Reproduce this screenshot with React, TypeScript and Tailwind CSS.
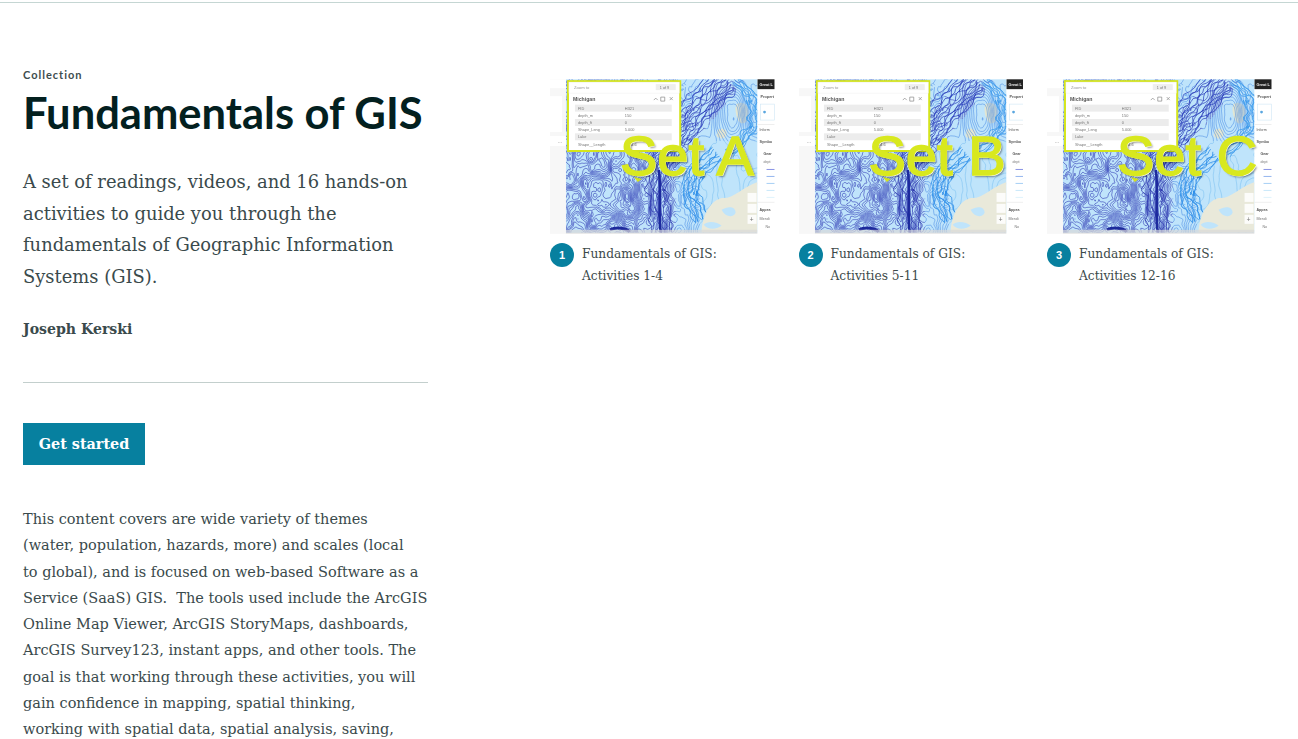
import { useId } from "react";

const serif = "font-['DejaVu_Serif',serif]";

// value noise for the contour picture in the thumbnails
const hash = (x: number, y: number) => {
  const s = Math.sin(x * 127.1 + y * 311.7) * 43758.5453;
  return s - Math.floor(s);
};
const smooth = (t: number) => t * t * (3 - 2 * t);
const noise = (x: number, y: number) => {
  const ix = Math.floor(x);
  const iy = Math.floor(y);
  const fx = smooth(x - ix);
  const fy = smooth(y - iy);
  const a = hash(ix, iy) + (hash(ix + 1, iy) - hash(ix, iy)) * fx;
  const b = hash(ix, iy + 1) + (hash(ix + 1, iy + 1) - hash(ix, iy + 1)) * fx;
  return a + (b - a) * fy;
};

const depth = (x: number, y: number) => {
  const rough = x < 125 ? 1 : Math.max(0.2, 1 - (x - 125) / 40);
  return (
    5 * noise(x / 26 + 3, y / 42 + 1) +
    rough * 2.4 * noise(x / 7, y / 14 + 5) +
    rough * 0.9 * noise(x / 3.5, y / 5)
  );
};

const tone = (x: number, y: number) => {
  if (x < 125) return 0;
  if (Math.abs(y - (85 - (x - 115) * 1.25)) < 22) return 0;
  if (x < 150 && y > 90) return 1;
  if (y < 70) return 1;
  return 2;
};

const buildContours = () => {
  const paths = ["", "", ""];
  const step = 2;
  let index = 0;
  for (let level = 0.6; level < 9; level += 0.3) {
    index++;
    for (let x = 16; x < 208; x += step) {
      for (let y = 9; y < 163; y += step) {
        const zone = tone(x, y);
        if (zone === 2 && index % 2 === 1) continue;
        const v = [
          depth(x, y),
          depth(x + step, y),
          depth(x + step, y + step),
          depth(x, y + step),
        ];
        const corners = [
          [x, y],
          [x + step, y],
          [x + step, y + step],
          [x, y + step],
        ];
        const hits: number[][] = [];
        for (let i = 0; i < 4; i++) {
          const j = (i + 1) % 4;
          if (v[i] < level !== v[j] < level) {
            const t = (level - v[i]) / (v[j] - v[i]);
            hits.push([
              corners[i][0] + (corners[j][0] - corners[i][0]) * t,
              corners[i][1] + (corners[j][1] - corners[i][1]) * t,
            ]);
          }
        }
        if (hits.length >= 2) {
          paths[zone] += `M${hits[0][0].toFixed(1)} ${hits[0][1].toFixed(1)}L${hits[1][0].toFixed(1)} ${hits[1][1].toFixed(1)}`;
        }
      }
    }
  }
  return paths;
};

// bundles of wobbly lines along a route, for the dense bands of the map
const strands = (route: number[][], count: number, spread: number, seed: number) => {
  let d = "";
  for (let n = 0; n < count; n++) {
    const off = (n / (count - 1) - 0.5) * spread;
    for (let s = 0; s < route.length - 1; s++) {
      const [x0, y0] = route[s];
      const [x1, y1] = route[s + 1];
      const len = Math.hypot(x1 - x0, y1 - y0);
      const nx = -(y1 - y0) / len;
      const ny = (x1 - x0) / len;
      const parts = Math.ceil(len / 3);
      for (let p = 0; p <= parts; p++) {
        const t = p / parts;
        const bx = x0 + (x1 - x0) * t;
        const by = y0 + (y1 - y0) * t;
        const w = (noise(bx / 6 + n * 1.7 + seed, by / 6 + n) - 0.5) * 7 + off;
        const cmd = p === 0 && s === 0 ? "M" : "L";
        d += `${cmd}${(bx + nx * w).toFixed(1)} ${(by + ny * w).toFixed(1)}`;
      }
    }
  }
  return d;
};

const contours = buildContours();
const diagonal = strands([[112, 92], [128, 62], [150, 36], [176, 9]], 13, 30, 1);
const channel = strands([[112, 88], [108, 120], [112, 163]], 8, 20, 7);
const shore = strands([[168, 84], [146, 102], [140, 124], [152, 150]], 9, 16, 13);
const rim = strands([[186, 10], [204, 30], [204, 58], [180, 84]], 7, 10, 19);

const popupRows = [
  ["FID", "H321"],
  ["depth_m", "150"],
  ["depth_ft", "0"],
  ["Shape_Leng", "5.000"],
  ["Lake", ""],
  ["Shape__Length", "1464.6"],
];

const MapPicture = () => {
  const id = useId();
  return (
    <svg viewBox="0 0 225 166" className="block h-[166px] w-full">
      <defs>
        <filter id={id}>
          <feGaussianBlur stdDeviation="0.45" />
        </filter>
        <clipPath id={`${id}c`}>
          <rect x="16" y="9" width="192" height="154" />
        </clipPath>
      </defs>
      <g filter={`url(#${id})`} fontFamily="'Liberation Sans', sans-serif">
        <rect x="0" y="9" width="16" height="155" fill="#f7f7f7" />
        <rect x="0" y="9" width="16" height="9" fill="#ffffff" />
        <rect x="0" y="26" width="12" height="36" fill="#ffffff" />
        <rect x="0" y="66" width="16" height="10" fill="#ffffff" />
        <text x="8" y="73" fontSize="5" fill="#666">...</text>

        <rect x="16" y="9" width="192" height="154" fill="#bfe4fb" />
        <g clipPath={`url(#${id}c)`} fill="none">
          {/* land and islands that the lines run over */}
          <path d="M187 34 C194 30 200 36 199 46 C198 53 192 56 189 51 C186 46 185 38 187 34Z" fill="#e3e6d2" />
          <path d="M168 60 C174 57 178 60 177 65 C175 70 169 69 167 66Z" fill="#e3e6d2" />
          {/* contours */}
          <path d={contours[2]} stroke="#6db9f0" strokeWidth="0.45" />
          <path d={contours[1]} stroke="#3d82e2" strokeWidth="0.5" />
          <path d={contours[0]} stroke="#2630b0" strokeWidth="0.55" />
          {/* dense bands */}
          <path d={shore} stroke="#2c8ee8" strokeWidth="0.8" />
          <path d={rim} stroke="#3f9cec" strokeWidth="0.8" />
          <path d={diagonal} stroke="#2438b8" strokeWidth="0.7" />
          <path d={channel} stroke="#2530aa" strokeWidth="0.7" />
          <path d="M109 100 C112 120 108 140 111 163" stroke="#1f2b9e" strokeWidth="2.6" />
          <path d="M60 160 C66 157 76 158 80 162" stroke="#1f2a9c" strokeWidth="3" />
          {/* mainland and lakes */}
          <path d="M152 163 C152 150 158 132 172 128 C182 130 192 118 208 112 L208 163Z" fill="#e9e9da" />
          <path d="M172 140 C178 136 186 136 186 143 C184 148 176 148 172 140Z" fill="#bfe4fb" />
          <path d="M154 155 C158 150 168 152 172 156 C166 160 158 160 154 155Z" fill="#bfe4fb" />
        </g>
        <rect x="16" y="160" width="192" height="4" fill="#d8d8d8" opacity="0.7" />

        {/* popup */}
        <rect x="18" y="11" width="112.5" height="70" fill="#ffffff" stroke="#d4e41c" strokeWidth="2" />
        <rect x="19" y="12" width="110.5" height="11" fill="#ffffff" stroke="#eeeeee" strokeWidth="0.5" />
        <text x="24" y="19" fontSize="4.2" fill="#999">Zoom to</text>
        <rect x="106" y="14" width="20" height="6" fill="#eeeeee" />
        <text x="110" y="18.5" fontSize="3.8" fill="#777">1 of 9</text>
        <text x="23" y="31" fontSize="5.2" fontWeight="700" fill="#555">Michigan</text>
        <path d="M104 30l2-2 2 2M111 27h4v4h-4zM120 27l3 3m0-3l-3 3" stroke="#888" strokeWidth="0.7" fill="none" />
        {popupRows.map(([label, value], i) => (
          <g key={label}>
            <rect x="25" y={34.5 + i * 7.2} width="97" height="7.2" fill={i % 2 === 0 ? "#ececec" : "#ffffff"} />
            <text x="28" y={39.5 + i * 7.2} fontSize="3.9" fill="#777">{label}</text>
            <text x="75" y={39.5 + i * 7.2} fontSize="3.9" fill="#777">{value}</text>
          </g>
        ))}
        <path d="M84 107 L92 109 L88 112Z" fill="#d4e41c" />

        {/* map controls */}
        <rect x="198" y="123" width="9" height="9" fill="#ffffff" opacity="0.85" />
        <rect x="198" y="134" width="9" height="9" fill="#ffffff" opacity="0.85" />
        <rect x="198" y="145" width="9" height="9" fill="#ffffff" opacity="0.85" />
        <text x="200" y="152" fontSize="7" fill="#777">+</text>

        {/* side panel */}
        <rect x="208" y="9" width="17" height="155" fill="#ffffff" />
        <rect x="208" y="9" width="17" height="10" fill="#222222" />
        <text x="210" y="16" fontSize="3.8" fontWeight="700" fill="#eeeeee">Great L</text>
        <text x="211" y="28" fontSize="3.8" fontWeight="700" fill="#555">Propert</text>
        <rect x="211" y="34" width="14" height="16" fill="#ffffff" stroke="#cfe6f5" strokeWidth="0.6" />
        <circle cx="215" cy="42" r="1.4" fill="#5aa6df" />
        <rect x="208" y="54" width="17" height="0.5" fill="#dddddd" />
        <text x="210" y="61" fontSize="3.6" fill="#555">Inform</text>
        <text x="210" y="73" fontSize="3.8" fontWeight="700" fill="#555">Symbo</text>
        <text x="214" y="85" fontSize="3.6" fontWeight="700" fill="#555">Gear</text>
        <text x="214" y="93" fontSize="3.6" fill="#777">dept</text>
        <rect x="217" y="99" width="8" height="0.8" fill="#6b78dd" />
        <rect x="217" y="106" width="8" height="0.8" fill="#7aa3ea" />
        <rect x="217" y="113" width="8" height="0.8" fill="#8fc4f2" />
        <rect x="217" y="120" width="8" height="1" fill="#c8e8fa" />
        <rect x="217" y="127" width="8" height="1" fill="#dff3fc" />
        <rect x="208" y="132" width="17" height="0.5" fill="#dddddd" />
        <text x="210" y="141" fontSize="3.6" fontWeight="700" fill="#555">Appea</text>
        <text x="210" y="150" fontSize="3.6" fill="#777">Blendi</text>
        <text x="216" y="158" fontSize="3.6" fill="#777">No</text>
      </g>
    </svg>
  );
};

const sets = [
  { letter: "A", step: 1, title: "Activities 1-4" },
  { letter: "B", step: 2, title: "Activities 5-11" },
  { letter: "C", step: 3, title: "Activities 12-16" },
];

export default function App() {
  return (
    <div className="h-[739px] overflow-hidden bg-white">
      <div className="mt-0.5 h-px bg-[#c5d6d3]" />
      <div className="flex pl-[23px] pt-[65px]">
        {/* Left column */}
        <div className="w-[405px] shrink-0">
          <div className="text-[11px] font-bold leading-[14px] tracking-[0.09em] text-[#3d4d4e] font-['Lato',sans-serif]">
            Collection
          </div>
          <h1 className="mt-[5px] text-[43.5px] font-bold leading-[50px] text-[#03201f] font-['Lato',sans-serif]">
            Fundamentals of GIS
          </h1>
          <p className={`mt-[29px] text-[17.9px] leading-[31.5px] text-[#3a4a4c] ${serif}`}>
            A set of readings, videos, and 16 hands-on activities to guide you through the fundamentals of Geographic Information Systems (GIS).
          </p>
          <div className={`mt-[25px] text-[14.1px] font-bold leading-[24px] text-[#3a4a4c] ${serif}`}>
            Joseph Kerski
          </div>
          <div className="mt-[41px] h-px bg-[#c3cfcd]" />
          <button className={`mt-10 block h-[42px] w-[122px] bg-[#07809f] text-[14.4px] font-bold text-white ${serif}`}>
            Get started
          </button>
          <p className={`mt-[41px] text-[14.5px] leading-[26.3px] text-[#3a4a4c] whitespace-pre ${serif}`}>
            {"This content covers are wide variety of themes\n(water, population, hazards, more) and scales (local\nto global), and is focused on web-based Software as a\nService (SaaS) GIS.  The tools used include the ArcGIS\nOnline Map Viewer, ArcGIS StoryMaps, dashboards,\nArcGIS Survey123, instant apps, and other tools. The\ngoal is that working through these activities, you will\ngain confidence in mapping, spatial thinking,\nworking with spatial data, spatial analysis, saving,"}
          </p>
        </div>

        {/* Right column */}
        <div className="ml-[122px] mt-[2px] flex gap-[24px]">
          {sets.map((set) => (
            <div key={set.letter} className="w-[224.5px]">
              <div className="relative">
                <MapPicture />
                <div className="absolute left-[70px] top-[58px] text-[56px] leading-none whitespace-nowrap text-[#d8e81f] blur-[0.3px] font-['Liberation_Sans',sans-serif] [-webkit-text-stroke:1.5px_#d8e81f] [text-shadow:1px_1px_0_#ffffff,2px_2px_2px_rgba(0,0,0,0.4)]">
                  Set {set.letter}
                </div>
              </div>
              <div className="mt-[7px] flex gap-2">
                <div className="flex h-6 w-6 shrink-0 items-center justify-center rounded-full bg-[#07809f] text-[11px] font-bold text-white font-['Liberation_Sans',sans-serif]">
                  {set.step}
                </div>
                <div className={`text-[12.2px] leading-[22px] text-[#3d4a4a] ${serif}`}>
                  <div>Fundamentals of GIS:</div>
                  <div>{set.title}</div>
                </div>
              </div>
            </div>
          ))}
        </div>
      </div>
    </div>
  );
}
